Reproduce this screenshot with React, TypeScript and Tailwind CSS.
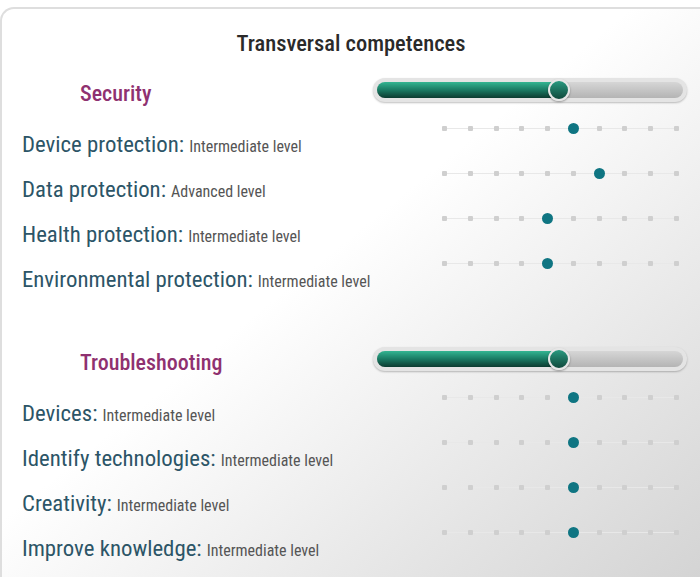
import React from "react";

type Item = { label: string; level: string; value: number };
type Section = { title: string; progress: number; items: Item[] };

const sections: Section[] = [
  {
    title: "Security",
    progress: 59.4,
    items: [
      { label: "Device protection:", level: "Intermediate level", value: 5 },
      { label: "Data protection:", level: "Advanced level", value: 6 },
      { label: "Health protection:", level: "Intermediate level", value: 4 },
      { label: "Environmental protection:", level: "Intermediate level", value: 4 },
    ],
  },
  {
    title: "Troubleshooting",
    progress: 59.4,
    items: [
      { label: "Devices:", level: "Intermediate level", value: 5 },
      { label: "Identify technologies:", level: "Intermediate level", value: 5 },
      { label: "Creativity:", level: "Intermediate level", value: 5 },
      { label: "Improve knowledge:", level: "Intermediate level", value: 5 },
    ],
  },
];

const font = { fontFamily: '"Roboto Condensed", "Liberation Sans Narrow", "DejaVu Sans Condensed", Roboto, sans-serif' };

const Slider: React.FC<{ progress: number }> = ({ progress }) => (
  <div className="relative h-[24px] w-[314px] shrink-0 rounded-full bg-[#e4e4e4] p-[4px] shadow-[0_1px_2px_rgba(0,0,0,0.25)]">
    <div className="relative h-full w-full rounded-full bg-linear-to-b from-[#d6d6d6] to-[#b4b4b4]">
      <div
        className="h-full rounded-l-full bg-linear-to-b from-[#34b592] via-[#1a7a63] to-[#0c3c31]"
        style={{ width: `${progress}%` }}
      />
      <div
        className="absolute top-1/2 h-[22px] w-[22px] -translate-x-1/2 -translate-y-1/2 rounded-full border-[2px] border-[#e6e6e6] bg-linear-to-b from-[#2a9a80] to-[#104a3d] shadow-[0_1px_2px_rgba(0,0,0,0.35)]"
        style={{ left: `${progress}%` }}
      />
    </div>
  </div>
);

const Dots: React.FC<{ value: number }> = ({ value }) => (
  <div className="relative flex h-[10px] w-[257px] items-center">
    <div className="absolute left-[13px] right-[13px] top-1/2 h-px bg-[#e8e8e8]" />
    {Array.from({ length: 10 }).map((_, i) => (
      <div key={i} className="relative flex h-full flex-1 items-center justify-center">
        {i === value ? (
          <div className="h-[11px] w-[11px] rounded-full bg-[#0f7582]" />
        ) : (
          <div className="h-[5px] w-[5px] rounded-[1px] bg-[#cfcfcf]" />
        )}
      </div>
    ))}
  </div>
);

export default function App() {
  return (
    <div className="min-h-[577px] w-[700px] overflow-hidden bg-white pt-[7px]" style={font}>
      <div className="min-h-[570px] rounded-tl-[14px] border-l-[2px] border-t-[2px] border-[#dedede] bg-linear-to-br from-white from-45% to-[#d4d4d4] pt-[22px]">
        <h1 className="text-center text-[22.5px] leading-[24px] font-medium text-[#2a2a2a]">Transversal competences</h1>
        {sections.map((section, si) => (
          <div key={section.title} className={si === 0 ? "mt-[23px]" : "mt-[55px]"}>
            <div className="flex h-[24px] items-center justify-between pr-[13px]">
              <h2 className="mt-[8px] pl-[78px] text-[22px] leading-[24px] font-medium text-[#8f3170]">{section.title}</h2>
              <Slider progress={section.progress} />
            </div>
            <div className="mt-[21px] flex flex-col gap-[11px]">
              {section.items.map((item) => (
                <div key={item.label} className="flex flex-col">
                  <div className="flex justify-end pr-[11px]">
                    <Dots value={item.value} />
                  </div>
                  <p className="flex h-[24px] items-baseline pl-[20px] whitespace-nowrap text-[#2c5567]">
                    <span className="text-[22.8px] leading-[24px]">{item.label}</span>
                    <span className="ml-[5px] text-[16px] leading-[24px] text-[#555]">{item.level}</span>
                  </p>
                </div>
              ))}
            </div>
          </div>
        ))}
      </div>
    </div>
  );
}
